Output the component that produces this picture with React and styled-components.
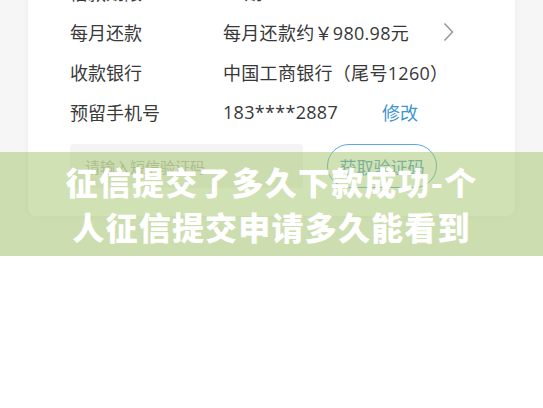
import styled, { createGlobalStyle } from "styled-components";

const GlobalStyle = createGlobalStyle`
  html, body {
    margin: 0;
    padding: 0;
    background: #ffffff;
  }
  body {
    font-family: "Noto Sans CJK SC", "Noto Sans", sans-serif;
  }
`;

const rows = [
  { label: "借款期限", value: "12期" },
  { label: "每月还款", value: "每月还款约￥980.98元", arrow: true },
  { label: "收款银行", value: "中国工商银行（尾号1260）" },
  { label: "预留手机号", value: "183****2887", action: "修改" },
];

export default function App() {
  return (
    <>
      <GlobalStyle />
      <Page>
        <Hero>
          <Card>
            {rows.map((row) => (
              <Row key={row.label}>
                <Label>{row.label}</Label>
                <Value>{row.value}</Value>
                {row.action && <Action>{row.action}</Action>}
                {row.arrow && (
                  <Chevron width="11" height="20" viewBox="0 0 11 20">
                    <path d="M1.5 1.5 L9.5 10 L1.5 18.5" fill="none" stroke="#9a9a9a" strokeWidth="1.6" />
                  </Chevron>
                )}
              </Row>
            ))}
            <CodeRow>
              <CodeInput>请输入短信验证码</CodeInput>
              <CodeButton>获取验证码</CodeButton>
            </CodeRow>
          </Card>
          <Caption>
            <CaptionLine>征信提交了多久下款成功-个</CaptionLine>
            <CaptionLine>人征信提交申请多久能看到</CaptionLine>
          </Caption>
        </Hero>
      </Page>
    </>
  );
}

const Page = styled.div`
  width: 543px;
  height: 408px;
  background: #ffffff;
  overflow: hidden;
`;

const Hero = styled.div`
  position: relative;
  height: 256px;
  background: #f6f6f6;
  overflow: hidden;
  padding: 0 28px;
  box-sizing: border-box;
`;

const Card = styled.div`
  margin-top: -28px;
  background: #ffffff;
  border-radius: 0 0 8px 8px;
  box-shadow: 0 0 6px rgba(0, 0, 0, 0.05);
  padding: 0 0 28px 42px;
`;

const Row = styled.div`
  display: flex;
  align-items: center;
  height: 40px;
`;

const Label = styled.span`
  width: 153px;
  font-size: 18px;
  color: #3a3a3a;
`;

const Value = styled.span`
  font-family: "Open Sans", "Noto Sans CJK SC", sans-serif;
  font-size: 18px;
  letter-spacing: 0.3px;
  color: #383838;
`;

const Action = styled.span`
  margin-left: 44px;
  font-size: 18px;
  color: #3d95cf;
`;

const Chevron = styled.svg`
  margin-left: 34px;
`;

const CodeRow = styled.div`
  display: flex;
  align-items: center;
  gap: 24px;
  margin-top: 12px;
`;

const CodeInput = styled.div`
  width: 233px;
  height: 44px;
  box-sizing: border-box;
  padding-left: 15px;
  display: flex;
  align-items: center;
  background: #f4f4f4;
  border-radius: 4px;
  font-size: 15px;
  color: #b5b5b5;
`;

const CodeButton = styled.div`
  width: 110px;
  height: 44px;
  box-sizing: border-box;
  display: flex;
  align-items: center;
  justify-content: center;
  border: 1.5px solid #5aa9d8;
  border-radius: 22px;
  font-size: 17px;
  color: #4a9bcf;
`;

const Caption = styled.div`
  position: absolute;
  left: 0;
  right: 0;
  bottom: 0;
  height: 104px;
  background: rgba(165, 197, 109, 0.52);
  display: flex;
  flex-direction: column;
  align-items: center;
  justify-content: center;
`;

const CaptionLine = styled.div`
  font-size: 32px;
  font-weight: 900;
  line-height: 45px;
  color: #ffffff;
  letter-spacing: 1.2px;
  white-space: nowrap;
`;
